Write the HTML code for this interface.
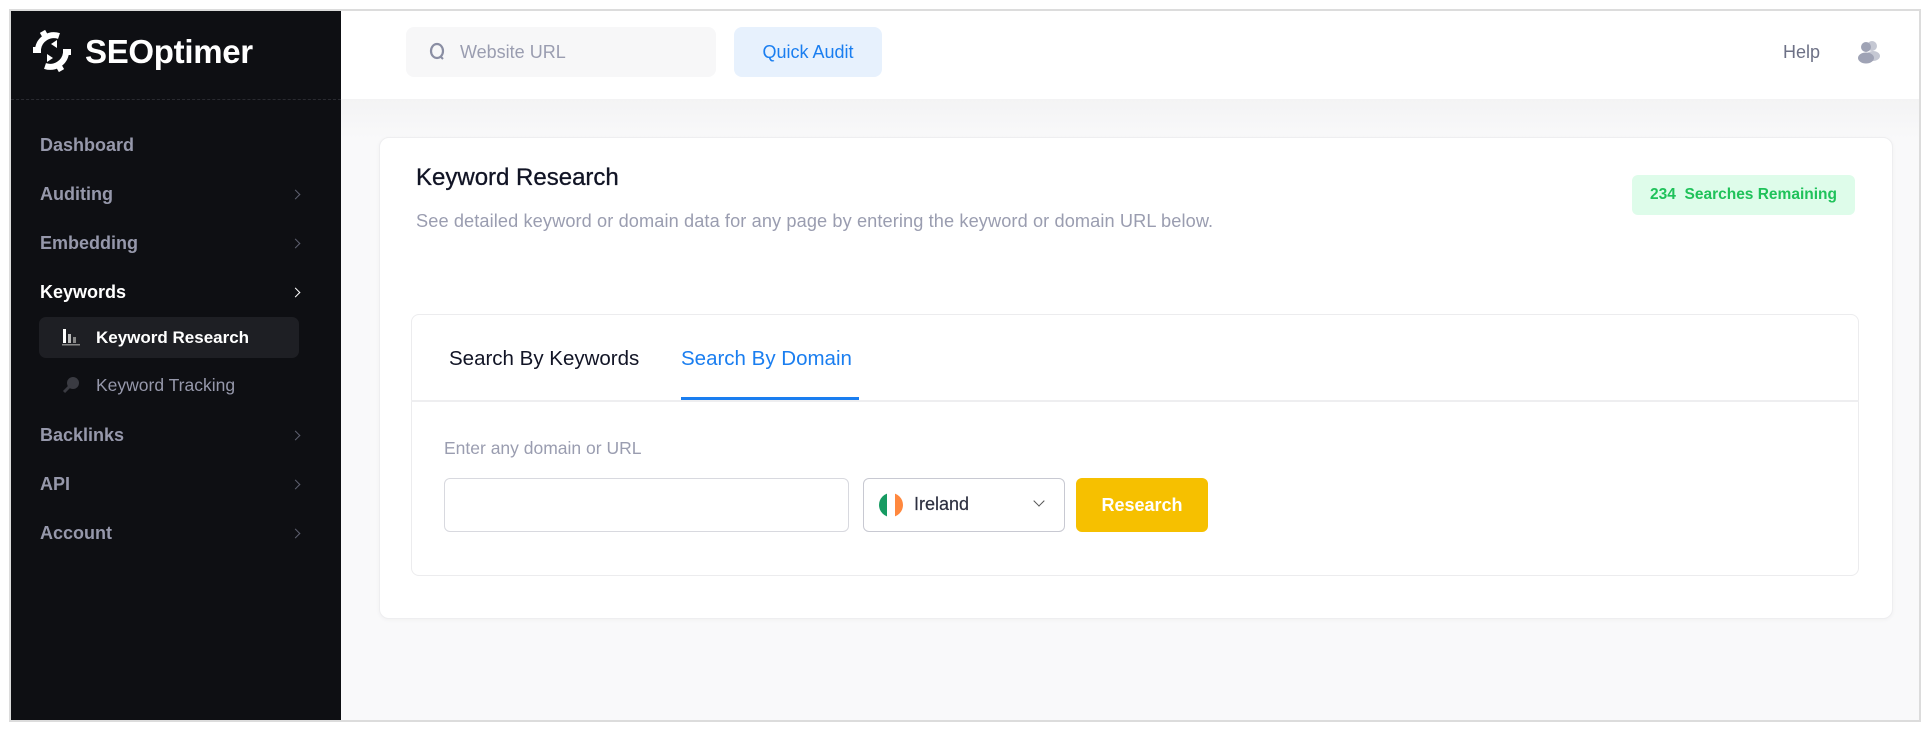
<!DOCTYPE html>
<html><head><meta charset="utf-8"><style>
*{box-sizing:border-box;margin:0;padding:0}
body{width:1930px;height:730px;background:#fff;font-family:"Liberation Sans",sans-serif;position:relative;overflow:hidden}
.frame{position:absolute;left:9px;top:9px;width:1912px;height:713px;border:2px solid #dcdcdc;overflow:hidden;background:#f9f9fa}
.side{position:absolute;left:0;top:0;width:330px;height:100%;background:#0e0f13}
.a{position:absolute}
.nav{position:absolute;left:29px;font-size:18px;font-weight:bold;color:#9698ab}
.chev{position:absolute;left:281px;width:7px;height:7px;border-right:1.5px solid #5d5f6e;border-top:1.5px solid #5d5f6e;transform:rotate(45deg)}
</style></head><body>
<div class="frame">
<div class="side">
  <svg class="a" style="left:18px;top:17px" width="46" height="46" viewBox="0 0 46 46">
    <g fill="none" stroke="#fff" stroke-width="6" stroke-linecap="butt">
      <path d="M30 8 A16 16 0 0 0 9 21"/>
      <path d="M16 38 A16 16 0 0 0 37 25"/>
    </g>
    <g fill="#fff"><rect x="4" y="19" width="8" height="6"/><rect x="34" y="21" width="8" height="6"/><rect x="12" y="3" width="6" height="7" transform="rotate(-30 15 6)"/><rect x="28" y="36" width="6" height="7" transform="rotate(-30 31 40)"/><path d="M22 16 l6 -4 l0 8z"/><path d="M24 30 l-6 4 l0 -8z"/></g>
  </svg>
  <div class="a" style="left:74px;top:22px;font-size:33px;font-weight:bold;color:#fff;letter-spacing:-0.3px">SEOptimer</div>
  <div class="a" style="left:0;top:88px;width:330px;border-top:1px dashed #2a2b31"></div>
  <div class="nav" style="top:124px">Dashboard</div>
  <div class="nav" style="top:173px">Auditing</div><div class="chev" style="top:180px"></div>
  <div class="nav" style="top:222px">Embedding</div><div class="chev" style="top:229px"></div>
  <div class="nav" style="top:271px;color:#fff">Keywords</div><div class="chev" style="top:278px;border-color:#fff"></div>
  <div class="a" style="left:28px;top:306px;width:260px;height:41px;background:#1e1f24;border-radius:7px"></div>
  <svg class="a" style="left:50px;top:316px" width="20" height="20" viewBox="0 0 20 20"><rect x="2" y="2" width="3" height="14" fill="#fff"/><rect x="7" y="7" width="3" height="9" fill="#bbb"/><rect x="12" y="10" width="3" height="6" fill="#888"/><rect x="1" y="17" width="18" height="1.5" fill="#888"/></svg>
  <div class="a" style="left:85px;top:317px;font-size:17px;font-weight:bold;color:#fff">Keyword Research</div>
  <svg class="a" style="left:50px;top:364px" width="20" height="20" viewBox="0 0 20 20"><circle cx="12" cy="8" r="6" fill="#3a3b42"/><path d="M8 12 L3 17" stroke="#3a3b42" stroke-width="3"/></svg>
  <div class="a" style="left:85px;top:364px;font-size:17.5px;color:#9698ab">Keyword Tracking</div>
  <div class="nav" style="top:414px">Backlinks</div><div class="chev" style="top:421px"></div>
  <div class="nav" style="top:463px">API</div><div class="chev" style="top:470px"></div>
  <div class="nav" style="top:512px">Account</div><div class="chev" style="top:519px"></div>
</div>
<div class="a" style="left:330px;top:0;right:0;height:88px;background:#fff"></div>
<div class="a" style="left:330px;top:88px;right:0;height:40px;background:linear-gradient(#f3f3f4,#f9f9fa)"></div>
<div class="a" style="left:395px;top:16px;width:310px;height:50px;background:#f7f7f8;border-radius:8px"></div>
<svg class="a" style="left:417px;top:31px" width="20" height="20" viewBox="0 0 20 20"><ellipse cx="9" cy="9" rx="6" ry="7" fill="none" stroke="#8a8ea3" stroke-width="2.2"/><path d="M13 15l2 2" stroke="#8a8ea3" stroke-width="2"/></svg>
<div class="a" style="left:449px;top:31px;font-size:18px;color:#9a9db0">Website URL</div>
<div class="a" style="left:723px;top:16px;width:148px;height:50px;background:#e7f1fd;border-radius:8px;color:#1a7ef0;font-size:18px;text-align:center;line-height:50px">Quick Audit</div>
<div class="a" style="left:1772px;top:31px;font-size:18px;color:#6d7186">Help</div>
<svg class="a" style="left:1846px;top:28px" width="24" height="26" viewBox="0 0 24 26"><circle cx="15" cy="7" r="5" fill="#c5c8d3"/><ellipse cx="16" cy="17" rx="7" ry="5" fill="#c5c8d3"/><circle cx="9" cy="8" r="5" fill="#9fa3b5"/><ellipse cx="9" cy="19" rx="8" ry="5.5" fill="#9fa3b5"/></svg>

<div class="a" style="left:368px;top:126px;width:1514px;height:482px;background:#fff;border:1px solid #eeeef0;border-radius:10px;box-shadow:0 1px 4px rgba(0,0,0,.04)"></div>
<div class="a" style="left:405px;top:153px;font-size:24px;color:#111425;-webkit-text-stroke:0.3px #111425">Keyword Research</div>
<div class="a" style="left:405px;top:200px;font-size:18.2px;color:#9a9db0;letter-spacing:0.1px">See detailed keyword or domain data for any page by entering the keyword or domain URL below.</div>
<div class="a" style="left:1621px;top:164px;width:223px;height:40px;background:#defcea;border-radius:6px;color:#1fc25a;font-size:15.5px;font-weight:bold;text-align:center;line-height:40px">234&nbsp; Searches Remaining</div>

<div class="a" style="left:400px;top:303px;width:1448px;height:262px;background:#fff;border:1px solid #ececee;border-radius:8px"></div>
<div class="a" style="left:400px;top:389px;width:1448px;height:2px;background:#eeeef0"></div>
<div class="a" style="left:438px;top:336px;font-size:20.5px;color:#111425">Search By Keywords</div>
<div class="a" style="left:670px;top:336px;font-size:20.5px;color:#1a7ef0">Search By Domain</div>
<div class="a" style="left:670px;top:386px;width:178px;height:3px;background:#1a7ef0"></div>
<div class="a" style="left:433px;top:427px;font-size:17.5px;color:#9a9db0">Enter any domain or URL</div>
<div class="a" style="left:433px;top:467px;width:405px;height:54px;border:1px solid #d8d9df;border-radius:6px;background:#fff"></div>
<div class="a" style="left:852px;top:467px;width:202px;height:54px;border:1px solid #c8c9d2;border-radius:6px;background:#fff"></div>
<div class="a" style="left:868px;top:482px;width:24px;height:24px;border-radius:50%;overflow:hidden;display:flex"><span style="flex:1;background:#169b62"></span><span style="flex:1;background:#fff"></span><span style="flex:1;background:#ff883e"></span></div>
<div class="a" style="left:903px;top:483px;font-size:18px;color:#2d3040;-webkit-text-stroke:0.2px #2d3040">Ireland</div>
<div class="a" style="left:1024px;top:486px;width:8px;height:8px;border-right:1.5px solid #555;border-bottom:1.5px solid #555;transform:rotate(45deg)"></div>
<div class="a" style="left:1065px;top:467px;width:132px;height:54px;background:#f6c000;border-radius:6px;color:#fff;font-size:18px;font-weight:bold;text-align:center;line-height:54px">Research</div>
</div>
</body></html>
